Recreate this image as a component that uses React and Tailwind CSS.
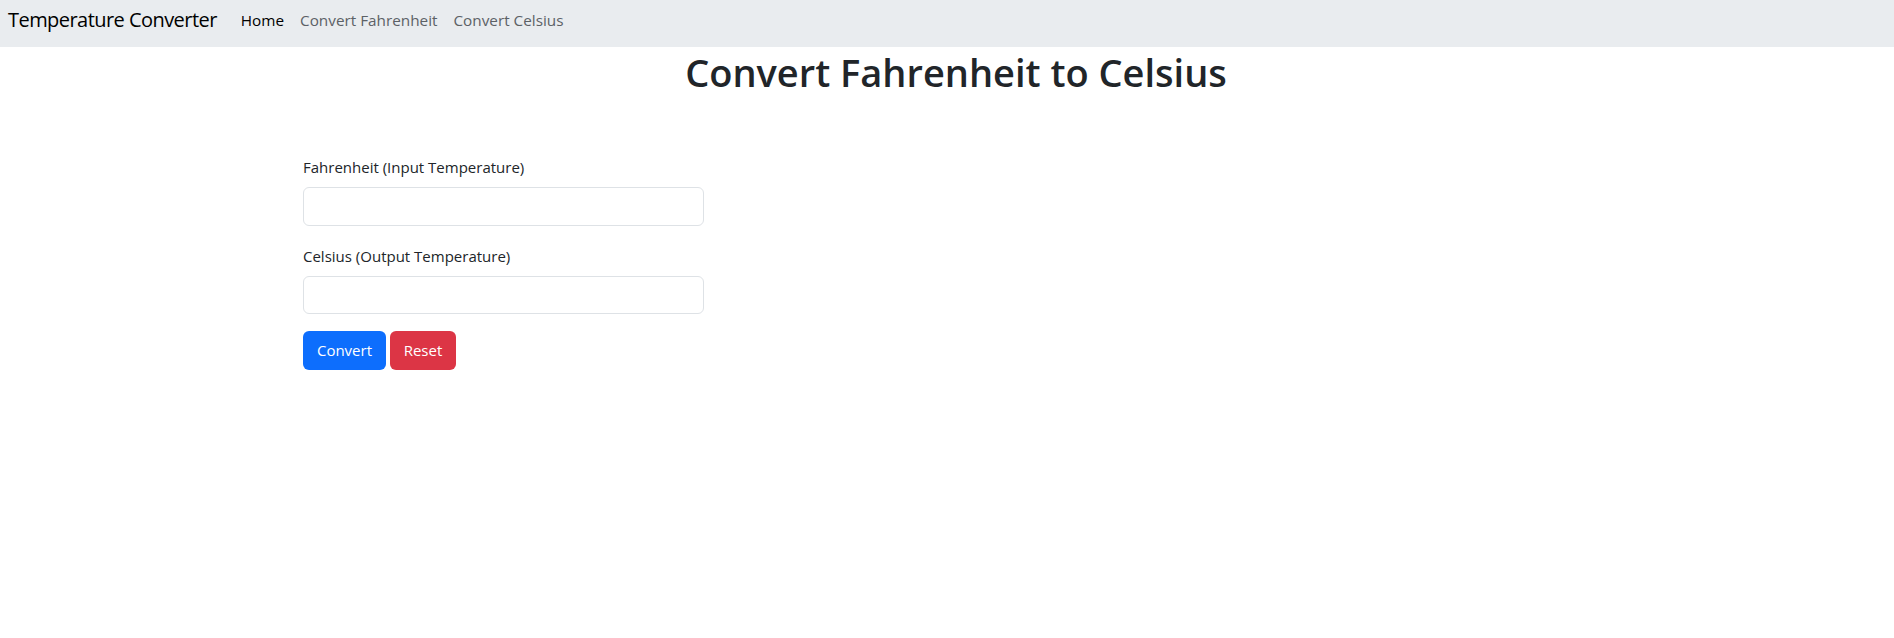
import { useState } from 'react';

export default function App() {
  const [fahrenheit, setFahrenheit] = useState('');
  const [celsius, setCelsius] = useState('');

  const convert = () => {
    const f = parseFloat(fahrenheit);
    if (!isNaN(f)) setCelsius((((f - 32) * 5) / 9).toFixed(2));
  };

  const reset = () => {
    setFahrenheit('');
    setCelsius('');
  };

  return (
    <div className="min-h-[638px] bg-white text-[#212529] font-['Open_Sans',sans-serif]">
      <nav className="h-[47px] bg-[#e9ecef] flex items-center pl-[8px] pb-[7px]">
        <a className="text-[20px] tracking-[-0.55px] text-black mr-[16px]">Temperature Converter</a>
        <ul className="flex text-[15.3px]">
          <li className="px-[8px] text-black">Home</li>
          <li className="px-[8px] text-[#5c6166]">Convert Fahrenheit</li>
          <li className="px-[8px] text-[#5c6166]">Convert Celsius</li>
        </ul>
      </nav>

      <h1 className="text-center pl-[18px] mt-[1px] text-[38px] leading-[48px] font-semibold">
        Convert Fahrenheit to Celsius
      </h1>

      <div className="pl-[303px] pt-[59px] w-[704px] box-content">
        <label className="block text-[15px] leading-[24px] mb-[8px]">Fahrenheit (Input Temperature)</label>
        <input
          value={fahrenheit}
          onChange={(e) => setFahrenheit(e.target.value)}
          className="block w-[401px] h-[39px] border border-[#dee2e6] rounded-[6px] px-3 outline-none"
        />
        <label className="block text-[15px] leading-[24px] mt-[18px] mb-[8px]">Celsius (Output Temperature)</label>
        <input
          value={celsius}
          readOnly
          className="block w-[401px] h-[38px] border border-[#dee2e6] rounded-[6px] px-3 outline-none"
        />
        <div className="flex gap-[4px] mt-[17px]">
          <button onClick={convert} className="h-[39px] w-[83px] bg-[#0d6efd] text-white text-[15px] rounded-[6px]">
            Convert
          </button>
          <button onClick={reset} className="h-[39px] w-[66px] bg-[#dc3545] text-white text-[15px] rounded-[6px]">
            Reset
          </button>
        </div>
      </div>
    </div>
  );
}
